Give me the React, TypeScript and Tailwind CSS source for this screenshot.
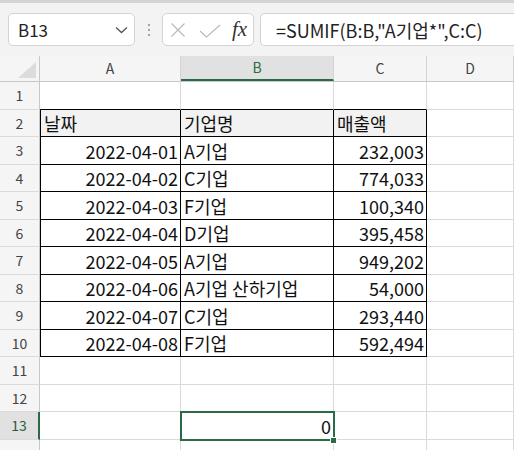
import React from "react";

const FONT = "font-['Noto_Sans_CJK_KR','Noto_Sans',sans-serif]";

type Row = { n: number; h: string; cells: [string, string, string, string] };

const rowHeights = ["h-[28px]", "h-[27px]"];

const data: [string, string, string][] = [
  ["2022-04-01", "A기업", "232,003"],
  ["2022-04-02", "C기업", "774,033"],
  ["2022-04-03", "F기업", "100,340"],
  ["2022-04-04", "D기업", "395,458"],
  ["2022-04-05", "A기업", "949,202"],
  ["2022-04-06", "A기업 산하기업", "54,000"],
  ["2022-04-07", "C기업", "293,440"],
  ["2022-04-08", "F기업", "592,494"],
];

const rows: Row[] = [];
for (let n = 1; n <= 14; n++) {
  let cells: [string, string, string, string] = ["", "", "", ""];
  if (n === 2) cells = ["날짜", "기업명", "매출액", ""];
  else if (n >= 3 && n <= 10) {
    const d = data[n - 3];
    cells = [d[0], d[1], d[2], ""];
  } else if (n === 13) cells = ["", "0", "", ""];
  rows.push({ n, h: rowHeights[(n - 1) % 2], cells });
}

const colW = ["w-[141px]", "w-[153px]", "w-[93px]", "w-[87px]"];

function Cell({ r, c, text }: { r: number; c: number; text: string }) {
  const inTable = r >= 2 && r <= 10 && c < 3;
  const blackBottom = r >= 1 && r <= 10 && c < 3;
  const header = r === 2 && c < 3;
  const selected = r === 13 && c === 1;
  const leftAlign = header || (c === 1 && !selected);
  const align = leftAlign ? "justify-start pl-[3px]" : "justify-end pr-[2px]";
  return (
    <div
      className={[
        "shrink-0 h-full flex items-end pb-[4px] border-b border-r whitespace-nowrap overflow-visible text-[18px] leading-none text-[#111]",
        colW[c],
        align,
        blackBottom ? "border-b-black" : "border-b-[#dadada]",
        inTable ? "border-r-black" : "border-r-[#dadada]",
        inTable && c === 0 ? "border-l border-l-black" : "",
        header ? "bg-[#f2f2f2]" : "bg-white",
        selected ? "relative" : "",
      ].join(" ")}
    >
      {text}
      {selected && (
        <>
          <div className="absolute left-[-1px] top-[-1px] w-[155px] h-[30px] border-2 border-[#2a6b45] z-10 pointer-events-none" />
          <div className="absolute right-[-4px] bottom-[-5px] w-[7px] h-[7px] bg-[#2a6b45] border border-white z-20" />
        </>
      )}
    </div>
  );
}

export default function App() {
  return (
    <div className={`w-[514px] h-[450px] overflow-hidden bg-white ${FONT}`}>
      {/* Formula bar */}
      <div className="h-[56px] border-t-[3px] border-[#d4d4d4] bg-[#f3f3f3] flex items-start pt-[10px] pl-[8px]">
        <div className="w-[127px] h-[33px] shrink-0 rounded-[5px] border border-[#d3d3d3] bg-white flex items-center justify-between pl-[9px] pr-[6px]">
          <span className="text-[17px] text-[#222] leading-none">B13</span>
          <svg width="13" height="8" viewBox="0 0 13 8" className="mt-[1px]">
            <path d="M1 1.5 L6.5 6.5 L12 1.5" fill="none" stroke="#555" strokeWidth="1.3" />
          </svg>
        </div>
        <div className="w-[27px] h-[33px] shrink-0 flex flex-col items-center justify-center gap-[3px]">
          <div className="w-[2px] h-[2px] bg-[#8a8a8a] rounded-full" />
          <div className="w-[2px] h-[2px] bg-[#8a8a8a] rounded-full" />
          <div className="w-[2px] h-[2px] bg-[#8a8a8a] rounded-full" />
        </div>
        <div className="w-[92px] h-[33px] shrink-0 rounded-[5px] border border-[#d3d3d3] bg-white flex items-center pl-[7px]">
          <svg width="16" height="16" viewBox="0 0 16 16">
            <path d="M1.5 1.5 L14.5 14.5 M14.5 1.5 L1.5 14.5" stroke="#b8b8b8" strokeWidth="1.1" fill="none" />
          </svg>
          <svg width="22" height="14" viewBox="0 0 22 14" className="ml-[13px] mt-[2px]">
            <path d="M1 7 L7.5 13 L21 1" stroke="#b8b8b8" strokeWidth="1.1" fill="none" />
          </svg>
          <span className="ml-[11px] text-[21px] italic leading-none text-[#333] font-['Liberation_Serif',serif]">
            fx
          </span>
        </div>
        <div className="ml-[6px] flex-1 h-[33px] rounded-l-[5px] border border-r-0 border-[#d3d3d3] bg-white flex items-center pl-[15px]">
          <span className="text-[18px] leading-none text-[#222] whitespace-nowrap">=SUMIF(B:B,"A기업*",C:C)</span>
        </div>
      </div>

      {/* Column headers */}
      <div className="flex h-[26px] bg-[#f5f5f5] border-b border-[#c8c8c8]">
        <div className="w-[40px] shrink-0 h-full border-r border-[#c8c8c8] relative">
          <svg width="18" height="16" viewBox="0 0 18 16" className="absolute right-[3px] bottom-[3px]">
            <path d="M18 0 L18 16 L0 16 Z" fill="#dcdcdc" />
          </svg>
        </div>
        {["A", "B", "C", "D"].map((l, i) => (
          <div
            key={l}
            className={[
              "shrink-0 h-full flex items-center justify-center text-[14px] border-r border-[#d4d4d4]",
              colW[i],
              i === 1
                ? "bg-[#e1e1e1] text-[#2a6b45] border-b-2 border-b-[#2a6b45]"
                : "text-[#444]",
            ].join(" ")}
          >
            {l}
          </div>
        ))}
      </div>

      {/* Rows */}
      {rows.map((row) => (
        <div key={row.n} className={`flex ${row.h}`}>
          <div
            className={[
              "w-[40px] shrink-0 h-full flex items-center justify-center text-[14px] border-b border-b-[#dadada]",
              row.n === 13
                ? "bg-[#e1e1e1] text-[#2a5a44] border-r-2 border-r-[#2a6b45]"
                : "bg-[#f5f5f5] text-[#444] border-r border-r-[#c8c8c8]",
            ].join(" ")}
          >
            {row.n < 14 ? row.n : ""}
          </div>
          {row.cells.map((t, c) => (
            <Cell key={c} r={row.n} c={c} text={t} />
          ))}
        </div>
      ))}
    </div>
  );
}
